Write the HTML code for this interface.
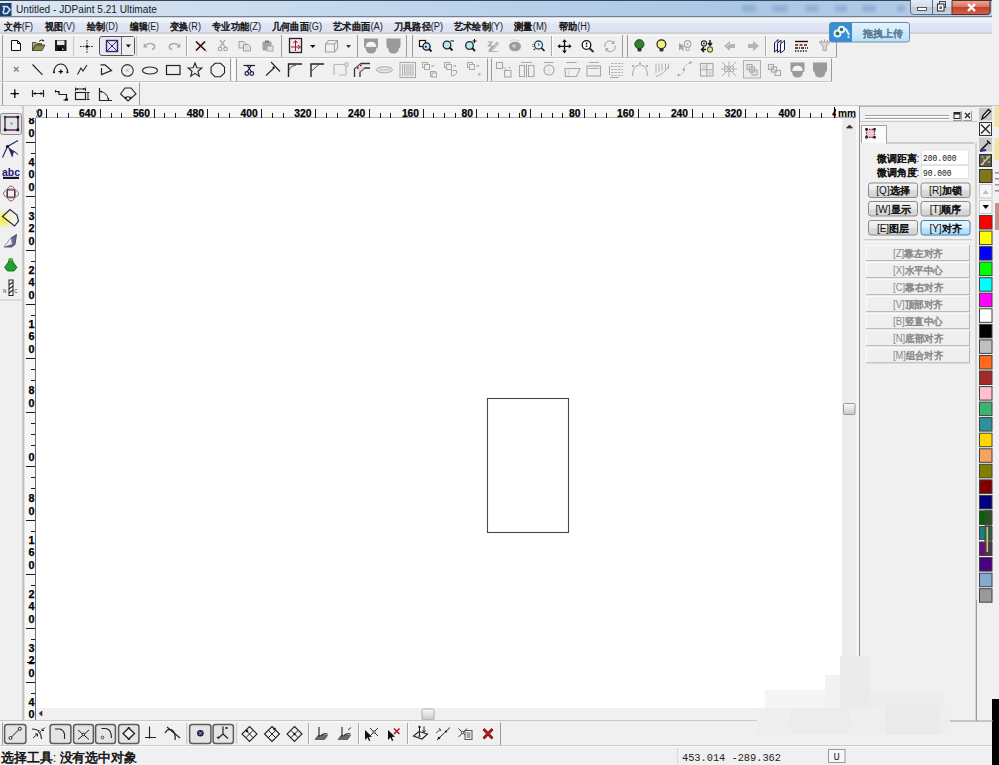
<!DOCTYPE html>
<html><head><meta charset="utf-8"><style>
html,body{margin:0;padding:0;width:999px;height:765px;overflow:hidden;background:#f0f0f0}
svg{position:absolute;left:0;top:0;font-family:'Liberation Sans', sans-serif}
</style></head><body>
<svg width="999" height="765" viewBox="0 0 999 765">
<rect x="0" y="0" width="999" height="765" fill="#f0f0f0"/>
<defs><linearGradient id="tb" x1="0" y1="0" x2="1" y2="0"><stop offset="0" stop-color="#dbe6f2"/><stop offset="0.35" stop-color="#c3d8ee"/><stop offset="0.75" stop-color="#a9c7e6"/><stop offset="1" stop-color="#b4cde8"/></linearGradient><linearGradient id="mb" x1="0" y1="0" x2="0" y2="1"><stop offset="0" stop-color="#f6f7fb"/><stop offset="0.3" stop-color="#eceff8"/><stop offset="0.45" stop-color="#e0e4f3"/><stop offset="1" stop-color="#dde1f1"/></linearGradient><linearGradient id="btn" x1="0" y1="0" x2="0" y2="1"><stop offset="0" stop-color="#f6f6f6"/><stop offset="0.5" stop-color="#e8e8e8"/><stop offset="0.5" stop-color="#dcdcdc"/><stop offset="1" stop-color="#d2d2d2"/></linearGradient><linearGradient id="btnb" x1="0" y1="0" x2="0" y2="1"><stop offset="0" stop-color="#eaf6fd"/><stop offset="0.5" stop-color="#d9f0fc"/><stop offset="0.5" stop-color="#bee6fd"/><stop offset="1" stop-color="#a7d9f5"/></linearGradient><linearGradient id="close" x1="0" y1="0" x2="0" y2="1"><stop offset="0" stop-color="#e9a99b"/><stop offset="0.5" stop-color="#d56f5c"/><stop offset="0.5" stop-color="#c7432c"/><stop offset="1" stop-color="#d4624a"/></linearGradient><linearGradient id="wbtn" x1="0" y1="0" x2="0" y2="1"><stop offset="0" stop-color="#e4ecf4"/><stop offset="0.5" stop-color="#d2dde9"/><stop offset="0.5" stop-color="#bccbdb"/><stop offset="1" stop-color="#c8d6e4"/></linearGradient><linearGradient id="thumb" x1="0" y1="0" x2="0" y2="1"><stop offset="0" stop-color="#fafafa"/><stop offset="1" stop-color="#c8c8c8"/></linearGradient><linearGradient id="bdu" x1="0" y1="0" x2="0" y2="1"><stop offset="0" stop-color="#e4f4fd"/><stop offset="1" stop-color="#b9e1f8"/></linearGradient></defs>
<rect x="0" y="0" width="992" height="17" fill="url(#tb)"/>
<rect x="0" y="0" width="992" height="1" fill="#3a4656"/>
<rect x="992" y="0" width="7" height="17" fill="#eef1f4"/>
<defs><filter id="bl" x="-50%" y="-50%" width="200%" height="200%"><feGaussianBlur stdDeviation="1.6"/></filter></defs>
<rect x="742" y="5" width="14" height="7" rx="2" fill="#7f9fc4" opacity="0.55" filter="url(#bl)"/>
<rect x="772" y="5" width="16" height="7" rx="2" fill="#7f9fc4" opacity="0.55" filter="url(#bl)"/>
<rect x="805" y="5" width="14" height="7" rx="2" fill="#7f9fc4" opacity="0.55" filter="url(#bl)"/>
<rect x="835" y="5" width="12" height="7" rx="2" fill="#7f9fc4" opacity="0.55" filter="url(#bl)"/>
<rect x="862" y="5" width="14" height="7" rx="2" fill="#7f9fc4" opacity="0.55" filter="url(#bl)"/>
<rect x="897" y="5" width="8" height="7" rx="2" fill="#7f9fc4" opacity="0.55" filter="url(#bl)"/>
<rect x="0" y="16" width="992" height="1.5" fill="#6f8192"/>
<rect x="0" y="17.5" width="992" height="15" fill="url(#mb)"/>
<rect x="0" y="32" width="992" height="2" fill="#cfd0d8"/>
<rect x="0" y="34" width="999" height="72" fill="#f0f0f0"/>
<rect x="0" y="57" width="837" height="1" fill="#c4c4c4"/>
<rect x="0" y="58" width="837" height="1" fill="#fbfbfb"/>
<rect x="0" y="81" width="832" height="1" fill="#c4c4c4"/>
<rect x="0" y="82" width="832" height="1" fill="#fbfbfb"/>
<rect x="0" y="105" width="999" height="1" fill="#c9c9c9"/>
<rect x="36" y="106" width="822" height="12" fill="#f7f7f7"/>
<rect x="36" y="117.5" width="822" height="1" fill="#6a6a6a"/>
<rect x="24" y="118" width="12" height="602" fill="#f7f7f7"/>
<rect x="23.5" y="118" width="1" height="602" fill="#cacaca"/>
<rect x="35" y="118" width="1" height="602" fill="#6a6a6a"/>
<rect x="36" y="118" width="806" height="590" fill="#ffffff"/>
<rect x="487.5" y="398.5" width="81" height="134" fill="none" stroke="#46465c" stroke-width="1.1"/>
<rect x="842" y="118" width="14" height="590" fill="#ececec"/>
<rect x="856" y="106" width="3" height="615" fill="#f6f6f6"/>
<rect x="859" y="106" width="2" height="615" fill="#8e8e8e"/>
<rect x="843.5" y="403.5" width="11.5" height="11" rx="1" fill="url(#thumb)" stroke="#8e8e8e" stroke-width="0.9"/>
<rect x="36" y="708" width="806" height="12" fill="#f0f0f0"/>
<rect x="422" y="709" width="12" height="11" rx="1.5" fill="url(#thumb)" stroke="#9c9c9c" stroke-width="0.8"/>
<rect x="0" y="720" width="999" height="1" fill="#c9c9c9"/>
<rect x="0" y="745" width="999" height="1" fill="#c9c9c9"/>
<rect x="0" y="746" width="999" height="1" fill="#fbfbfb"/>
<rect x="860" y="106" width="132" height="615" fill="#f0f0f0"/>
<rect x="860" y="106" width="132" height="1" fill="#b8b8b8"/>
<g shape-rendering="crispEdges">
<rect x="57" y="113" width="1" height="5" fill="#1a1a1a"/>
<rect x="68" y="113" width="1" height="5" fill="#1a1a1a"/>
<rect x="46" y="109" width="1" height="9" fill="#1a1a1a"/>
<rect x="111" y="113" width="1" height="5" fill="#1a1a1a"/>
<rect x="121" y="113" width="1" height="5" fill="#1a1a1a"/>
<rect x="100" y="109" width="1" height="9" fill="#1a1a1a"/>
<rect x="164" y="113" width="1" height="5" fill="#1a1a1a"/>
<rect x="175" y="113" width="1" height="5" fill="#1a1a1a"/>
<rect x="154" y="109" width="1" height="9" fill="#1a1a1a"/>
<rect x="218" y="113" width="1" height="5" fill="#1a1a1a"/>
<rect x="229" y="113" width="1" height="5" fill="#1a1a1a"/>
<rect x="207" y="109" width="1" height="9" fill="#1a1a1a"/>
<rect x="272" y="113" width="1" height="5" fill="#1a1a1a"/>
<rect x="283" y="113" width="1" height="5" fill="#1a1a1a"/>
<rect x="261" y="109" width="1" height="9" fill="#1a1a1a"/>
<rect x="326" y="113" width="1" height="5" fill="#1a1a1a"/>
<rect x="337" y="113" width="1" height="5" fill="#1a1a1a"/>
<rect x="315" y="109" width="1" height="9" fill="#1a1a1a"/>
<rect x="380" y="113" width="1" height="5" fill="#1a1a1a"/>
<rect x="390" y="113" width="1" height="5" fill="#1a1a1a"/>
<rect x="369" y="109" width="1" height="9" fill="#1a1a1a"/>
<rect x="433" y="113" width="1" height="5" fill="#1a1a1a"/>
<rect x="444" y="113" width="1" height="5" fill="#1a1a1a"/>
<rect x="455" y="113" width="1" height="5" fill="#1a1a1a"/>
<rect x="423" y="109" width="1" height="9" fill="#1a1a1a"/>
<rect x="487" y="113" width="1" height="5" fill="#1a1a1a"/>
<rect x="498" y="113" width="1" height="5" fill="#1a1a1a"/>
<rect x="509" y="113" width="1" height="5" fill="#1a1a1a"/>
<rect x="519" y="113" width="1" height="5" fill="#1a1a1a"/>
<rect x="476" y="109" width="1" height="9" fill="#1a1a1a"/>
<rect x="541" y="113" width="1" height="5" fill="#1a1a1a"/>
<rect x="552" y="113" width="1" height="5" fill="#1a1a1a"/>
<rect x="562" y="113" width="1" height="5" fill="#1a1a1a"/>
<rect x="530" y="109" width="1" height="9" fill="#1a1a1a"/>
<rect x="595" y="113" width="1" height="5" fill="#1a1a1a"/>
<rect x="606" y="113" width="1" height="5" fill="#1a1a1a"/>
<rect x="584" y="109" width="1" height="9" fill="#1a1a1a"/>
<rect x="649" y="113" width="1" height="5" fill="#1a1a1a"/>
<rect x="659" y="113" width="1" height="5" fill="#1a1a1a"/>
<rect x="638" y="109" width="1" height="9" fill="#1a1a1a"/>
<rect x="702" y="113" width="1" height="5" fill="#1a1a1a"/>
<rect x="713" y="113" width="1" height="5" fill="#1a1a1a"/>
<rect x="692" y="109" width="1" height="9" fill="#1a1a1a"/>
<rect x="756" y="113" width="1" height="5" fill="#1a1a1a"/>
<rect x="767" y="113" width="1" height="5" fill="#1a1a1a"/>
<rect x="745" y="109" width="1" height="9" fill="#1a1a1a"/>
<rect x="810" y="113" width="1" height="5" fill="#1a1a1a"/>
<rect x="821" y="113" width="1" height="5" fill="#1a1a1a"/>
<rect x="799" y="109" width="1" height="9" fill="#1a1a1a"/>
<rect x="853" y="109" width="1" height="9" fill="#1a1a1a"/>
</g>
<svg x="36" y="106" width="820" height="12" overflow="hidden"><g transform="translate(-36,-106)">
<text x="42.5" y="117" text-anchor="end" font-size="11" font-weight="bold" fill="#000" stroke="#000" stroke-width="0.25" textLength="17.2" lengthAdjust="spacingAndGlyphs">720</text>
<text x="96.3" y="117" text-anchor="end" font-size="11" font-weight="bold" fill="#000" stroke="#000" stroke-width="0.25" textLength="17.2" lengthAdjust="spacingAndGlyphs">640</text>
<text x="150.1" y="117" text-anchor="end" font-size="11" font-weight="bold" fill="#000" stroke="#000" stroke-width="0.25" textLength="17.2" lengthAdjust="spacingAndGlyphs">560</text>
<text x="203.9" y="117" text-anchor="end" font-size="11" font-weight="bold" fill="#000" stroke="#000" stroke-width="0.25" textLength="17.2" lengthAdjust="spacingAndGlyphs">480</text>
<text x="257.7" y="117" text-anchor="end" font-size="11" font-weight="bold" fill="#000" stroke="#000" stroke-width="0.25" textLength="17.2" lengthAdjust="spacingAndGlyphs">400</text>
<text x="311.5" y="117" text-anchor="end" font-size="11" font-weight="bold" fill="#000" stroke="#000" stroke-width="0.25" textLength="17.2" lengthAdjust="spacingAndGlyphs">320</text>
<text x="365.3" y="117" text-anchor="end" font-size="11" font-weight="bold" fill="#000" stroke="#000" stroke-width="0.25" textLength="17.2" lengthAdjust="spacingAndGlyphs">240</text>
<text x="419.1" y="117" text-anchor="end" font-size="11" font-weight="bold" fill="#000" stroke="#000" stroke-width="0.25" textLength="17.2" lengthAdjust="spacingAndGlyphs">160</text>
<text x="472.9" y="117" text-anchor="end" font-size="11" font-weight="bold" fill="#000" stroke="#000" stroke-width="0.25" textLength="11.5" lengthAdjust="spacingAndGlyphs">80</text>
<text x="526.7" y="117" text-anchor="end" font-size="11" font-weight="bold" fill="#000" stroke="#000" stroke-width="0.25" textLength="5.8" lengthAdjust="spacingAndGlyphs">0</text>
<text x="580.5" y="117" text-anchor="end" font-size="11" font-weight="bold" fill="#000" stroke="#000" stroke-width="0.25" textLength="11.5" lengthAdjust="spacingAndGlyphs">80</text>
<text x="634.3" y="117" text-anchor="end" font-size="11" font-weight="bold" fill="#000" stroke="#000" stroke-width="0.25" textLength="17.2" lengthAdjust="spacingAndGlyphs">160</text>
<text x="688.1" y="117" text-anchor="end" font-size="11" font-weight="bold" fill="#000" stroke="#000" stroke-width="0.25" textLength="17.2" lengthAdjust="spacingAndGlyphs">240</text>
<text x="741.9" y="117" text-anchor="end" font-size="11" font-weight="bold" fill="#000" stroke="#000" stroke-width="0.25" textLength="17.2" lengthAdjust="spacingAndGlyphs">320</text>
<text x="795.7" y="117" text-anchor="end" font-size="11" font-weight="bold" fill="#000" stroke="#000" stroke-width="0.25" textLength="17.2" lengthAdjust="spacingAndGlyphs">400</text>
<text x="849.5" y="117" text-anchor="end" font-size="11" font-weight="bold" fill="#000" stroke="#000" stroke-width="0.25" textLength="17.2" lengthAdjust="spacingAndGlyphs">480</text>
</g></svg>
<rect x="836" y="107" width="21" height="10" fill="#f7f7f7"/>
<text x="838" y="117" font-size="10.8" font-weight="bold" fill="#000" textLength="18" lengthAdjust="spacingAndGlyphs">mm</text>
<rect x="834" y="107" width="1" height="11" fill="#000"/>
<g shape-rendering="crispEdges">
<rect x="31" y="121" width="4" height="1" fill="#1a1a1a"/>
<rect x="31" y="132" width="4" height="1" fill="#1a1a1a"/>
<rect x="26" y="142" width="9" height="1" fill="#1a1a1a"/>
<rect x="31" y="153" width="4" height="1" fill="#1a1a1a"/>
<rect x="31" y="164" width="4" height="1" fill="#1a1a1a"/>
<rect x="31" y="175" width="4" height="1" fill="#1a1a1a"/>
<rect x="31" y="186" width="4" height="1" fill="#1a1a1a"/>
<rect x="26" y="196" width="9" height="1" fill="#1a1a1a"/>
<rect x="31" y="207" width="4" height="1" fill="#1a1a1a"/>
<rect x="31" y="218" width="4" height="1" fill="#1a1a1a"/>
<rect x="31" y="229" width="4" height="1" fill="#1a1a1a"/>
<rect x="31" y="240" width="4" height="1" fill="#1a1a1a"/>
<rect x="26" y="250" width="9" height="1" fill="#1a1a1a"/>
<rect x="31" y="261" width="4" height="1" fill="#1a1a1a"/>
<rect x="31" y="272" width="4" height="1" fill="#1a1a1a"/>
<rect x="31" y="283" width="4" height="1" fill="#1a1a1a"/>
<rect x="31" y="294" width="4" height="1" fill="#1a1a1a"/>
<rect x="26" y="304" width="9" height="1" fill="#1a1a1a"/>
<rect x="31" y="315" width="4" height="1" fill="#1a1a1a"/>
<rect x="31" y="326" width="4" height="1" fill="#1a1a1a"/>
<rect x="31" y="337" width="4" height="1" fill="#1a1a1a"/>
<rect x="31" y="348" width="4" height="1" fill="#1a1a1a"/>
<rect x="26" y="358" width="9" height="1" fill="#1a1a1a"/>
<rect x="31" y="369" width="4" height="1" fill="#1a1a1a"/>
<rect x="31" y="380" width="4" height="1" fill="#1a1a1a"/>
<rect x="31" y="391" width="4" height="1" fill="#1a1a1a"/>
<rect x="31" y="402" width="4" height="1" fill="#1a1a1a"/>
<rect x="26" y="412" width="9" height="1" fill="#1a1a1a"/>
<rect x="31" y="423" width="4" height="1" fill="#1a1a1a"/>
<rect x="31" y="434" width="4" height="1" fill="#1a1a1a"/>
<rect x="31" y="445" width="4" height="1" fill="#1a1a1a"/>
<rect x="31" y="456" width="4" height="1" fill="#1a1a1a"/>
<rect x="26" y="466" width="9" height="1" fill="#1a1a1a"/>
<rect x="31" y="477" width="4" height="1" fill="#1a1a1a"/>
<rect x="31" y="488" width="4" height="1" fill="#1a1a1a"/>
<rect x="31" y="499" width="4" height="1" fill="#1a1a1a"/>
<rect x="31" y="510" width="4" height="1" fill="#1a1a1a"/>
<rect x="26" y="520" width="9" height="1" fill="#1a1a1a"/>
<rect x="31" y="531" width="4" height="1" fill="#1a1a1a"/>
<rect x="31" y="542" width="4" height="1" fill="#1a1a1a"/>
<rect x="31" y="553" width="4" height="1" fill="#1a1a1a"/>
<rect x="31" y="564" width="4" height="1" fill="#1a1a1a"/>
<rect x="26" y="574" width="9" height="1" fill="#1a1a1a"/>
<rect x="31" y="585" width="4" height="1" fill="#1a1a1a"/>
<rect x="31" y="596" width="4" height="1" fill="#1a1a1a"/>
<rect x="31" y="607" width="4" height="1" fill="#1a1a1a"/>
<rect x="31" y="618" width="4" height="1" fill="#1a1a1a"/>
<rect x="26" y="628" width="9" height="1" fill="#1a1a1a"/>
<rect x="31" y="639" width="4" height="1" fill="#1a1a1a"/>
<rect x="31" y="650" width="4" height="1" fill="#1a1a1a"/>
<rect x="31" y="661" width="4" height="1" fill="#1a1a1a"/>
<rect x="31" y="672" width="4" height="1" fill="#1a1a1a"/>
<rect x="26" y="682" width="9" height="1" fill="#1a1a1a"/>
<rect x="31" y="693" width="4" height="1" fill="#1a1a1a"/>
<rect x="31" y="704" width="4" height="1" fill="#1a1a1a"/>
<rect x="31" y="715" width="4" height="1" fill="#1a1a1a"/>
</g>
<svg x="24" y="118" width="11" height="602" overflow="hidden"><g transform="translate(-24,-118)">
<rect x="28" y="102.4" width="7" height="36.0" fill="#f7f7f7"/>
<text x="34.5" y="112" text-anchor="end" font-size="10.8" stroke="#000" stroke-width="0.25" font-weight="bold" fill="#000">4</text>
<text x="34.5" y="124" text-anchor="end" font-size="10.8" stroke="#000" stroke-width="0.25" font-weight="bold" fill="#000">8</text>
<text x="34.5" y="137" text-anchor="end" font-size="10.8" stroke="#000" stroke-width="0.25" font-weight="bold" fill="#000">0</text>
<rect x="28" y="156.4" width="7" height="36.0" fill="#f7f7f7"/>
<text x="34.5" y="166" text-anchor="end" font-size="10.8" stroke="#000" stroke-width="0.25" font-weight="bold" fill="#000">4</text>
<text x="34.5" y="178" text-anchor="end" font-size="10.8" stroke="#000" stroke-width="0.25" font-weight="bold" fill="#000">0</text>
<text x="34.5" y="191" text-anchor="end" font-size="10.8" stroke="#000" stroke-width="0.25" font-weight="bold" fill="#000">0</text>
<rect x="28" y="210.4" width="7" height="36.0" fill="#f7f7f7"/>
<text x="34.5" y="220" text-anchor="end" font-size="10.8" stroke="#000" stroke-width="0.25" font-weight="bold" fill="#000">3</text>
<text x="34.5" y="232" text-anchor="end" font-size="10.8" stroke="#000" stroke-width="0.25" font-weight="bold" fill="#000">2</text>
<text x="34.5" y="245" text-anchor="end" font-size="10.8" stroke="#000" stroke-width="0.25" font-weight="bold" fill="#000">0</text>
<rect x="28" y="264.4" width="7" height="36.0" fill="#f7f7f7"/>
<text x="34.5" y="274" text-anchor="end" font-size="10.8" stroke="#000" stroke-width="0.25" font-weight="bold" fill="#000">2</text>
<text x="34.5" y="286" text-anchor="end" font-size="10.8" stroke="#000" stroke-width="0.25" font-weight="bold" fill="#000">4</text>
<text x="34.5" y="299" text-anchor="end" font-size="10.8" stroke="#000" stroke-width="0.25" font-weight="bold" fill="#000">0</text>
<rect x="28" y="318.4" width="7" height="36.0" fill="#f7f7f7"/>
<text x="34.5" y="328" text-anchor="end" font-size="10.8" stroke="#000" stroke-width="0.25" font-weight="bold" fill="#000">1</text>
<text x="34.5" y="340" text-anchor="end" font-size="10.8" stroke="#000" stroke-width="0.25" font-weight="bold" fill="#000">6</text>
<text x="34.5" y="353" text-anchor="end" font-size="10.8" stroke="#000" stroke-width="0.25" font-weight="bold" fill="#000">0</text>
<rect x="28" y="384.4" width="7" height="24.0" fill="#f7f7f7"/>
<text x="34.5" y="394" text-anchor="end" font-size="10.8" stroke="#000" stroke-width="0.25" font-weight="bold" fill="#000">8</text>
<text x="34.5" y="407" text-anchor="end" font-size="10.8" stroke="#000" stroke-width="0.25" font-weight="bold" fill="#000">0</text>
<rect x="28" y="450.4" width="7" height="12.0" fill="#f7f7f7"/>
<text x="34.5" y="461" text-anchor="end" font-size="10.8" stroke="#000" stroke-width="0.25" font-weight="bold" fill="#000">0</text>
<rect x="28" y="492.4" width="7" height="24.0" fill="#f7f7f7"/>
<text x="34.5" y="502" text-anchor="end" font-size="10.8" stroke="#000" stroke-width="0.25" font-weight="bold" fill="#000">8</text>
<text x="34.5" y="515" text-anchor="end" font-size="10.8" stroke="#000" stroke-width="0.25" font-weight="bold" fill="#000">0</text>
<rect x="28" y="534.4" width="7" height="36.0" fill="#f7f7f7"/>
<text x="34.5" y="544" text-anchor="end" font-size="10.8" stroke="#000" stroke-width="0.25" font-weight="bold" fill="#000">1</text>
<text x="34.5" y="556" text-anchor="end" font-size="10.8" stroke="#000" stroke-width="0.25" font-weight="bold" fill="#000">6</text>
<text x="34.5" y="569" text-anchor="end" font-size="10.8" stroke="#000" stroke-width="0.25" font-weight="bold" fill="#000">0</text>
<rect x="28" y="588.4" width="7" height="36.0" fill="#f7f7f7"/>
<text x="34.5" y="598" text-anchor="end" font-size="10.8" stroke="#000" stroke-width="0.25" font-weight="bold" fill="#000">2</text>
<text x="34.5" y="610" text-anchor="end" font-size="10.8" stroke="#000" stroke-width="0.25" font-weight="bold" fill="#000">4</text>
<text x="34.5" y="623" text-anchor="end" font-size="10.8" stroke="#000" stroke-width="0.25" font-weight="bold" fill="#000">0</text>
<rect x="28" y="642.4" width="7" height="36.0" fill="#f7f7f7"/>
<text x="34.5" y="652" text-anchor="end" font-size="10.8" stroke="#000" stroke-width="0.25" font-weight="bold" fill="#000">3</text>
<text x="34.5" y="664" text-anchor="end" font-size="10.8" stroke="#000" stroke-width="0.25" font-weight="bold" fill="#000">2</text>
<text x="34.5" y="677" text-anchor="end" font-size="10.8" stroke="#000" stroke-width="0.25" font-weight="bold" fill="#000">0</text>
<rect x="28" y="696.4" width="7" height="36.0" fill="#f7f7f7"/>
<text x="34.5" y="706" text-anchor="end" font-size="10.8" stroke="#000" stroke-width="0.25" font-weight="bold" fill="#000">4</text>
<text x="34.5" y="718" text-anchor="end" font-size="10.8" stroke="#000" stroke-width="0.25" font-weight="bold" fill="#000">0</text>
<text x="34.5" y="731" text-anchor="end" font-size="10.8" stroke="#000" stroke-width="0.25" font-weight="bold" fill="#000">0</text>
</g></svg>
<rect x="27" y="662" width="8" height="1" fill="#000"/>
<rect x="0" y="106" width="23" height="614" fill="#f0f0f0"/>
<rect x="22.5" y="106" width="1" height="614" fill="#a8a8a8"/>
<rect x="0" y="110" width="23" height="1" fill="#fafafa"/>
<rect x="0" y="299.5" width="23" height="1" fill="#c4c4c4"/>
<rect x="0.5" y="113.5" width="21" height="21" rx="2" fill="#e6e6ea" stroke="#8a8a8a" stroke-width="1"/>
<rect x="979.5" y="215.5" width="12.5" height="13.5" fill="#ff0000" stroke="#404040" stroke-width="1"/>
<rect x="979.5" y="231.1" width="12.5" height="13.5" fill="#ffff00" stroke="#404040" stroke-width="1"/>
<rect x="979.5" y="246.6" width="12.5" height="13.5" fill="#0000ff" stroke="#404040" stroke-width="1"/>
<rect x="979.5" y="262.1" width="12.5" height="13.5" fill="#00ff00" stroke="#404040" stroke-width="1"/>
<rect x="979.5" y="277.7" width="12.5" height="13.5" fill="#00ffff" stroke="#404040" stroke-width="1"/>
<rect x="979.5" y="293.2" width="12.5" height="13.5" fill="#ff00ff" stroke="#404040" stroke-width="1"/>
<rect x="979.5" y="308.8" width="12.5" height="13.5" fill="#ffffff" stroke="#404040" stroke-width="1"/>
<rect x="979.5" y="324.4" width="12.5" height="13.5" fill="#000000" stroke="#404040" stroke-width="1"/>
<rect x="979.5" y="339.9" width="12.5" height="13.5" fill="#c0c0c0" stroke="#404040" stroke-width="1"/>
<rect x="979.5" y="355.5" width="12.5" height="13.5" fill="#ff6a1f" stroke="#404040" stroke-width="1"/>
<rect x="979.5" y="371.0" width="12.5" height="13.5" fill="#a52a2a" stroke="#404040" stroke-width="1"/>
<rect x="979.5" y="386.6" width="12.5" height="13.5" fill="#ffc0cb" stroke="#404040" stroke-width="1"/>
<rect x="979.5" y="402.1" width="12.5" height="13.5" fill="#3cb371" stroke="#404040" stroke-width="1"/>
<rect x="979.5" y="417.6" width="12.5" height="13.5" fill="#2f8f9a" stroke="#404040" stroke-width="1"/>
<rect x="979.5" y="433.2" width="12.5" height="13.5" fill="#ffd700" stroke="#404040" stroke-width="1"/>
<rect x="979.5" y="448.8" width="12.5" height="13.5" fill="#f4a460" stroke="#404040" stroke-width="1"/>
<rect x="979.5" y="464.3" width="12.5" height="13.5" fill="#808000" stroke="#404040" stroke-width="1"/>
<rect x="979.5" y="479.9" width="12.5" height="13.5" fill="#800000" stroke="#404040" stroke-width="1"/>
<rect x="979.5" y="495.4" width="12.5" height="13.5" fill="#000080" stroke="#404040" stroke-width="1"/>
<rect x="979.5" y="510.9" width="12.5" height="13.5" fill="#006400" stroke="#404040" stroke-width="1"/>
<rect x="979.5" y="526.5" width="12.5" height="13.5" fill="#1f7f7f" stroke="#404040" stroke-width="1"/>
<rect x="979.5" y="542.0" width="12.5" height="13.5" fill="#6a0d83" stroke="#404040" stroke-width="1"/>
<rect x="979.5" y="557.6" width="12.5" height="13.5" fill="#4b0082" stroke="#404040" stroke-width="1"/>
<rect x="979.5" y="573.2" width="12.5" height="13.5" fill="#87a9d0" stroke="#404040" stroke-width="1"/>
<rect x="979.5" y="588.7" width="12.5" height="13.5" fill="#9a9a9a" stroke="#404040" stroke-width="1"/>
<rect x="979" y="108" width="13" height="12.5" fill="#c9c9c9"/>
<rect x="979" y="137.5" width="13" height="14" fill="#c9c9c9"/>
<rect x="979.5" y="122.5" width="12" height="13" fill="#f4f4f4" stroke="#333" stroke-width="1"/>
<path d="M981 124.5 L990 133.5 M990 124.5 L981 133.5" stroke="#222" stroke-width="1.3"/>
<rect x="979.5" y="154.5" width="12" height="12" fill="#5a5a4a" stroke="#333"/>
<rect x="979.5" y="169.5" width="12.5" height="13" fill="#80781a" stroke="#333"/>
<rect x="979.5" y="184.5" width="12.5" height="13.5" fill="#f7f7f7" stroke="#c8c8c8"/>
<path d="M982.5 194 L985.7 190 L989 194 Z" fill="#bdbdbd"/>
<rect x="979.5" y="200.5" width="12.5" height="13" fill="#fbfbfb" stroke="#c8c8c8"/>
<path d="M982.5 205 L985.7 209 L989 205 Z" fill="#000"/>
<path d="M982 119 L983 115.5 L988.5 109.5 L990.5 111.5 L984.8 117.3 Z" fill="#fff" stroke="#111" stroke-width="1.4"/>
<path d="M981 150 L988 143 M987 140.5 L990.5 144" stroke="#111" stroke-width="1.6"/><path d="M980 151 L986 150" stroke="#1a2a9a" stroke-width="2"/>
<path d="M981 165 L990 156" stroke="#e0d890" stroke-width="1.3"/><path d="M981.5 157 h2 M986 157 h2 M983 160 h2 M988 162h2 M982 164h2" stroke="#ddd" stroke-width="1"/>
<rect x="993" y="106" width="6" height="614" fill="#f1f1f1"/>
<rect x="994.5" y="106" width="4.5" height="21" fill="#f0e6a0"/>
<rect x="994.5" y="138" width="4.5" height="22" fill="#f0e6a0"/>
<rect x="995" y="172" width="4" height="1.6" fill="#8a9ab0"/>
<rect x="995" y="178" width="4" height="1.6" fill="#a08a8a"/>
<rect x="995" y="184" width="4" height="1.6" fill="#8aa0b0"/>
<rect x="995" y="190" width="4" height="1.6" fill="#a08a8a"/>
<rect x="995" y="203" width="4" height="27" fill="#c89088"/>
<rect x="992" y="699" width="7" height="66" fill="#000"/>
<rect x="861" y="107" width="116" height="614" fill="#f0f0f0"/>
<rect x="865" y="115" width="84" height="1" fill="#a0a0a0"/><rect x="865" y="116" width="84" height="1" fill="#ffffff"/>
<rect x="865" y="118" width="84" height="1" fill="#a0a0a0"/><rect x="865" y="119" width="84" height="1" fill="#ffffff"/>
<rect x="954" y="112.5" width="6" height="6" fill="none" stroke="#222" stroke-width="1"/><rect x="954" y="112.5" width="6" height="2" fill="#222"/><path d="M953 120.5h9M961.5 111v10" stroke="#9a9a9a" stroke-width="1"/>
<path d="M965 113 L970 118 M970 113 L965 118" stroke="#222" stroke-width="1.2"/><path d="M963 120.5h9M971.5 111v10" stroke="#9a9a9a" stroke-width="1"/>
<rect x="860" y="121" width="117" height="1" fill="#c8c8c8"/>
<path d="M861.5 143 V125.5 H886.5 V143" fill="#fbfbfb" stroke="#a0a0a0" stroke-width="1"/>
<rect x="886" y="142.5" width="88" height="1" fill="#a8a8a8"/>
<rect x="975.5" y="142.5" width="1" height="578" fill="#b8b8b8"/>
<rect x="866.5" y="129.3" width="8" height="8" fill="#f8c4d4" stroke="#5a2a40" stroke-width="1.2" stroke-dasharray="1.5 1"/>
<rect x="865.3" y="128.10000000000002" width="2.4" height="2.4" fill="#111"/>
<rect x="873.3" y="128.10000000000002" width="2.4" height="2.4" fill="#111"/>
<rect x="865.3" y="136.10000000000002" width="2.4" height="2.4" fill="#111"/>
<rect x="873.3" y="136.10000000000002" width="2.4" height="2.4" fill="#111"/>
<text x="876.5" y="161.5" font-size="10" fill="#111"><tspan stroke="#111" stroke-width="0.55">微调距离</tspan>:</text>
<text x="876.5" y="176" font-size="10" fill="#111"><tspan stroke="#111" stroke-width="0.55">微调角度</tspan>:</text>
<rect x="921.5" y="150" width="47" height="14.5" fill="#ffffff" stroke="#e4e4e4" stroke-width="1"/>
<rect x="921.5" y="165.5" width="47" height="13" fill="#ffffff" stroke="#e4e4e4" stroke-width="1"/>
<text x="923" y="161" font-family="Liberation Mono" font-size="9.6" fill="#111" textLength="33.5" lengthAdjust="spacingAndGlyphs">200.000</text>
<text x="923" y="176" font-family="Liberation Mono" font-size="9.6" fill="#111" textLength="28.5" lengthAdjust="spacingAndGlyphs">90.000</text>
<rect x="868.5" y="183.0" width="49" height="14.5" rx="2.5" fill="url(#btn)" stroke="#8a8a8a" stroke-width="1"/>
<text x="893" y="194.0" text-anchor="middle" font-size="10" fill="#111">[Q]<tspan stroke="#111" stroke-width="0.55">选择</tspan></text>
<rect x="921.0" y="183.0" width="49" height="14.5" rx="2.5" fill="url(#btn)" stroke="#8a8a8a" stroke-width="1"/>
<text x="945.5" y="194.0" text-anchor="middle" font-size="10" fill="#111">[R]<tspan stroke="#111" stroke-width="0.55">加锁</tspan></text>
<rect x="868.5" y="201.5" width="49" height="14.5" rx="2.5" fill="url(#btn)" stroke="#8a8a8a" stroke-width="1"/>
<text x="893" y="212.5" text-anchor="middle" font-size="10" fill="#111">[W]<tspan stroke="#111" stroke-width="0.55">显示</tspan></text>
<rect x="921.0" y="201.5" width="49" height="14.5" rx="2.5" fill="url(#btn)" stroke="#8a8a8a" stroke-width="1"/>
<text x="945.5" y="212.5" text-anchor="middle" font-size="10" fill="#111">[T]<tspan stroke="#111" stroke-width="0.55">顺序</tspan></text>
<rect x="868.5" y="220.5" width="49" height="14.5" rx="2.5" fill="url(#btn)" stroke="#8a8a8a" stroke-width="1"/>
<text x="893" y="231.5" text-anchor="middle" font-size="10" fill="#111">[E]<tspan stroke="#111" stroke-width="0.55">图层</tspan></text>
<rect x="921.0" y="220.5" width="49" height="14.5" rx="2.5" fill="url(#btnb)" stroke="#3c7fb1" stroke-width="1"/>
<text x="945.5" y="231.5" text-anchor="middle" font-size="10" fill="#111">[Y]<tspan stroke="#111" stroke-width="0.55">对齐</tspan></text>
<rect x="864" y="239.5" width="108" height="1" fill="#a8a8a8"/><rect x="864" y="240.5" width="108" height="1" fill="#fff"/>
<rect x="866" y="245.0" width="104" height="16" fill="#efefef"/>
<rect x="866" y="245.0" width="104" height="1" fill="#fbfbfb"/><rect x="866" y="245.0" width="1" height="16" fill="#fbfbfb"/>
<rect x="866" y="260.0" width="104" height="1" fill="#b4b4b4"/><rect x="969" y="245.0" width="1" height="16" fill="#b4b4b4"/>
<text x="918" y="256.8" text-anchor="middle" font-size="10" fill="#8a8a8a" textLength="50" lengthAdjust="spacingAndGlyphs">[Z]<tspan stroke="#8a8a8a" stroke-width="0.55">靠左对齐</tspan></text>
<rect x="866" y="262.1" width="104" height="16" fill="#efefef"/>
<rect x="866" y="262.1" width="104" height="1" fill="#fbfbfb"/><rect x="866" y="262.1" width="1" height="16" fill="#fbfbfb"/>
<rect x="866" y="277.1" width="104" height="1" fill="#b4b4b4"/><rect x="969" y="262.1" width="1" height="16" fill="#b4b4b4"/>
<text x="918" y="273.9" text-anchor="middle" font-size="10" fill="#8a8a8a" textLength="50" lengthAdjust="spacingAndGlyphs">[X]<tspan stroke="#8a8a8a" stroke-width="0.55">水平中心</tspan></text>
<rect x="866" y="279.1" width="104" height="16" fill="#efefef"/>
<rect x="866" y="279.1" width="104" height="1" fill="#fbfbfb"/><rect x="866" y="279.1" width="1" height="16" fill="#fbfbfb"/>
<rect x="866" y="294.1" width="104" height="1" fill="#b4b4b4"/><rect x="969" y="279.1" width="1" height="16" fill="#b4b4b4"/>
<text x="918" y="290.9" text-anchor="middle" font-size="10" fill="#8a8a8a" textLength="50" lengthAdjust="spacingAndGlyphs">[C]<tspan stroke="#8a8a8a" stroke-width="0.55">靠右对齐</tspan></text>
<rect x="866" y="296.1" width="104" height="16" fill="#efefef"/>
<rect x="866" y="296.1" width="104" height="1" fill="#fbfbfb"/><rect x="866" y="296.1" width="1" height="16" fill="#fbfbfb"/>
<rect x="866" y="311.1" width="104" height="1" fill="#b4b4b4"/><rect x="969" y="296.1" width="1" height="16" fill="#b4b4b4"/>
<text x="918" y="307.9" text-anchor="middle" font-size="10" fill="#8a8a8a" textLength="50" lengthAdjust="spacingAndGlyphs">[V]<tspan stroke="#8a8a8a" stroke-width="0.55">顶部对齐</tspan></text>
<rect x="866" y="313.2" width="104" height="16" fill="#efefef"/>
<rect x="866" y="313.2" width="104" height="1" fill="#fbfbfb"/><rect x="866" y="313.2" width="1" height="16" fill="#fbfbfb"/>
<rect x="866" y="328.2" width="104" height="1" fill="#b4b4b4"/><rect x="969" y="313.2" width="1" height="16" fill="#b4b4b4"/>
<text x="918" y="325.0" text-anchor="middle" font-size="10" fill="#8a8a8a" textLength="50" lengthAdjust="spacingAndGlyphs">[B]<tspan stroke="#8a8a8a" stroke-width="0.55">竖直中心</tspan></text>
<rect x="866" y="330.2" width="104" height="16" fill="#efefef"/>
<rect x="866" y="330.2" width="104" height="1" fill="#fbfbfb"/><rect x="866" y="330.2" width="1" height="16" fill="#fbfbfb"/>
<rect x="866" y="345.2" width="104" height="1" fill="#b4b4b4"/><rect x="969" y="330.2" width="1" height="16" fill="#b4b4b4"/>
<text x="918" y="342.1" text-anchor="middle" font-size="10" fill="#8a8a8a" textLength="50" lengthAdjust="spacingAndGlyphs">[N]<tspan stroke="#8a8a8a" stroke-width="0.55">底部对齐</tspan></text>
<rect x="866" y="347.3" width="104" height="16" fill="#efefef"/>
<rect x="866" y="347.3" width="104" height="1" fill="#fbfbfb"/><rect x="866" y="347.3" width="1" height="16" fill="#fbfbfb"/>
<rect x="866" y="362.3" width="104" height="1" fill="#b4b4b4"/><rect x="969" y="347.3" width="1" height="16" fill="#b4b4b4"/>
<text x="918" y="359.1" text-anchor="middle" font-size="10" fill="#8a8a8a" textLength="50" lengthAdjust="spacingAndGlyphs">[M]<tspan stroke="#8a8a8a" stroke-width="0.55">组合对齐</tspan></text>
<rect x="976" y="600" width="1" height="121" fill="#9a9a9a"/>
<rect x="677.5" y="748" width="1" height="17" fill="#c8c8c8"/><rect x="678.5" y="748" width="1" height="17" fill="#fafafa"/>
<rect x="950" y="720.5" width="43" height="1" fill="#9a9a9a"/>
<text x="1" y="761.5" font-size="12.5" fill="#111" textLength="136" lengthAdjust="spacingAndGlyphs"><tspan stroke="#111" stroke-width="0.55">选择工具</tspan>: <tspan stroke="#111" stroke-width="0.55">没有选中对象</tspan></text>
<text x="682" y="761" font-family="Liberation Mono" font-size="11" fill="#222" textLength="99" lengthAdjust="spacingAndGlyphs">453.014 -289.362</text>
<rect x="828.5" y="749.5" width="16.5" height="13" fill="#f7f7f7" stroke="#9a9a9a" stroke-width="1"/>
<text x="836.7" y="760" text-anchor="middle" font-family="Liberation Mono" font-size="10.5" fill="#333">U</text>
<rect x="0" y="3" width="11.5" height="13" fill="#1c3f6e"/>
<path d="M2.5 6.5 H7 L10 9.5 L7 13.5 H3" fill="none" stroke="#cfe6f8" stroke-width="1.6"/><path d="M4.5 7 L3 13" stroke="#cfe6f8" stroke-width="1.6"/>
<text x="16" y="13" font-size="10.1" fill="#1b1b1b">Untitled - JDPaint 5.21 Ultimate</text>
<text x="4" y="29.5" font-size="10" fill="#1b1b1b" textLength="29" lengthAdjust="spacingAndGlyphs"><tspan stroke="#1b1b1b" stroke-width="0.55">文件</tspan>(F)</text>
<text x="45" y="29.5" font-size="10" fill="#1b1b1b" textLength="30" lengthAdjust="spacingAndGlyphs"><tspan stroke="#1b1b1b" stroke-width="0.55">视图</tspan>(V)</text>
<text x="87" y="29.5" font-size="10" fill="#1b1b1b" textLength="31" lengthAdjust="spacingAndGlyphs"><tspan stroke="#1b1b1b" stroke-width="0.55">绘制</tspan>(D)</text>
<text x="130" y="29.5" font-size="10" fill="#1b1b1b" textLength="29" lengthAdjust="spacingAndGlyphs"><tspan stroke="#1b1b1b" stroke-width="0.55">编辑</tspan>(E)</text>
<text x="170" y="29.5" font-size="10" fill="#1b1b1b" textLength="31" lengthAdjust="spacingAndGlyphs"><tspan stroke="#1b1b1b" stroke-width="0.55">变换</tspan>(R)</text>
<text x="212" y="29.5" font-size="10" fill="#1b1b1b" textLength="49" lengthAdjust="spacingAndGlyphs"><tspan stroke="#1b1b1b" stroke-width="0.55">专业功能</tspan>(Z)</text>
<text x="272" y="29.5" font-size="10" fill="#1b1b1b" textLength="50" lengthAdjust="spacingAndGlyphs"><tspan stroke="#1b1b1b" stroke-width="0.55">几何曲面</tspan>(G)</text>
<text x="333" y="29.5" font-size="10" fill="#1b1b1b" textLength="50" lengthAdjust="spacingAndGlyphs"><tspan stroke="#1b1b1b" stroke-width="0.55">艺术曲面</tspan>(A)</text>
<text x="394" y="29.5" font-size="10" fill="#1b1b1b" textLength="49" lengthAdjust="spacingAndGlyphs"><tspan stroke="#1b1b1b" stroke-width="0.55">刀具路径</tspan>(P)</text>
<text x="454" y="29.5" font-size="10" fill="#1b1b1b" textLength="49" lengthAdjust="spacingAndGlyphs"><tspan stroke="#1b1b1b" stroke-width="0.55">艺术绘制</tspan>(Y)</text>
<text x="514" y="29.5" font-size="10" fill="#1b1b1b" textLength="33" lengthAdjust="spacingAndGlyphs"><tspan stroke="#1b1b1b" stroke-width="0.55">测量</tspan>(M)</text>
<text x="559" y="29.5" font-size="10" fill="#1b1b1b" textLength="31" lengthAdjust="spacingAndGlyphs"><tspan stroke="#1b1b1b" stroke-width="0.55">帮助</tspan>(H)</text>
<path d="M910.5 0 V11.5 Q910.5 14.5 913.5 14.5 H987 Q990 14.5 990 11.5 V0" fill="url(#wbtn)" stroke="#5e6f83" stroke-width="1"/>
<path d="M952 0.5 H990 V11.5 Q990 14.5 987 14.5 H952 Z" fill="url(#close)" stroke="#5a2a20" stroke-width="1"/>
<rect x="932" y="0" width="1" height="14.5" fill="#5a6a7a"/>
<rect x="917.5" y="7.5" width="9" height="3" fill="#fff" stroke="#334" stroke-width="0.8"/>
<rect x="939.5" y="1.5" width="6" height="6" fill="none" stroke="#445" stroke-width="1"/><rect x="937.5" y="4" width="6.5" height="7" fill="#fff" stroke="#334" stroke-width="1.1"/><rect x="939.5" y="6.5" width="2.5" height="2.5" fill="#556"/>
<path d="M968 4 L975 11 M975 4 L968 11" stroke="#fff" stroke-width="2.4"/>
<rect x="0" y="35" width="836" height="1" fill="#fafafa"/>
<rect x="0" y="58.5" width="831" height="1" fill="#fafafa"/>
<rect x="0" y="82.5" width="139" height="1" fill="#fafafa"/>
<rect x="2" y="35" width="1" height="22" fill="#9a9a9a"/>
<rect x="281" y="35" width="1" height="22" fill="#9a9a9a"/>
<rect x="281" y="35" width="1" height="22" fill="#9a9a9a"/>
<rect x="357" y="35" width="1" height="22" fill="#9a9a9a"/>
<rect x="357" y="35" width="1" height="22" fill="#9a9a9a"/>
<rect x="406" y="35" width="1" height="22" fill="#9a9a9a"/>
<rect x="412" y="35" width="1" height="22" fill="#9a9a9a"/>
<rect x="622" y="35" width="1" height="22" fill="#9a9a9a"/>
<rect x="627" y="35" width="1" height="22" fill="#9a9a9a"/>
<rect x="836" y="35" width="1" height="22" fill="#9a9a9a"/>
<rect x="73.5" y="36" width="1" height="20" fill="#a8a8a8"/>
<rect x="74.5" y="36" width="1" height="20" fill="#fdfdfd"/>
<rect x="136.5" y="36" width="1" height="20" fill="#a8a8a8"/>
<rect x="137.5" y="36" width="1" height="20" fill="#fdfdfd"/>
<rect x="186" y="36" width="1" height="20" fill="#a8a8a8"/>
<rect x="187" y="36" width="1" height="20" fill="#fdfdfd"/>
<rect x="551" y="36" width="1" height="20" fill="#a8a8a8"/>
<rect x="552" y="36" width="1" height="20" fill="#fdfdfd"/>
<rect x="765" y="36" width="1" height="20" fill="#a8a8a8"/>
<rect x="766" y="36" width="1" height="20" fill="#fdfdfd"/>
<rect x="2" y="58.5" width="1" height="22.5" fill="#9a9a9a"/>
<rect x="230" y="58.5" width="1" height="22.5" fill="#9a9a9a"/>
<rect x="236" y="58.5" width="1" height="22.5" fill="#9a9a9a"/>
<rect x="487" y="58.5" width="1" height="22.5" fill="#9a9a9a"/>
<rect x="491" y="58.5" width="1" height="22.5" fill="#9a9a9a"/>
<rect x="831" y="58.5" width="1" height="22.5" fill="#9a9a9a"/>
<rect x="2" y="82.5" width="1" height="22.5" fill="#9a9a9a"/>
<rect x="139" y="82.5" width="1" height="22.5" fill="#9a9a9a"/>
<rect x="2" y="721.5" width="1" height="23.5" fill="#9a9a9a"/>
<rect x="500" y="721.5" width="1" height="23.5" fill="#9a9a9a"/>
<rect x="0" y="721.5" width="501" height="1" fill="#fafafa"/>
<rect x="186.5" y="723" width="1" height="21" fill="#a8a8a8"/>
<rect x="187.5" y="723" width="1" height="21" fill="#fdfdfd"/>
<rect x="236.5" y="723" width="1" height="21" fill="#a8a8a8"/>
<rect x="237.5" y="723" width="1" height="21" fill="#fdfdfd"/>
<rect x="308" y="723" width="1" height="21" fill="#a8a8a8"/>
<rect x="309" y="723" width="1" height="21" fill="#fdfdfd"/>
<rect x="358" y="723" width="1" height="21" fill="#a8a8a8"/>
<rect x="359" y="723" width="1" height="21" fill="#fdfdfd"/>
<rect x="407" y="723" width="1" height="21" fill="#a8a8a8"/>
<rect x="408" y="723" width="1" height="21" fill="#fdfdfd"/>
<rect x="406" y="35" width="1" height="22" fill="#9a9a9a"/>
<path d="M11.5 40.5 H17.5 L20.5 43.5 V50.5 H11.5 Z" fill="#fff" stroke="#111" stroke-width="1"/><path d="M17.5 40.5 V43.5 H20.5" fill="none" stroke="#111" stroke-width="1"/>
<path d="M32.5 42.5 H36 L37 43.5 H41.5 V45 H35 L32.5 50.5 Z" fill="#b8b870" stroke="#333" stroke-width="0.8"/><path d="M32.5 50.5 L35.5 45 H45 L42 50.5 Z" fill="#8c8c3c" stroke="#333" stroke-width="0.8"/><path d="M39 41.5 Q41 39 43.5 40.5" fill="none" stroke="#222" stroke-width="1"/><path d="M43 39.5 L44.5 41 L42.5 41.5Z" fill="#222"/>
<rect x="55" y="40" width="11.5" height="11" fill="#1e1e1e"/><rect x="57" y="40.5" width="7.5" height="4.5" fill="#e8e8e8"/><rect x="58" y="47.5" width="5.5" height="3.5" fill="#000"/><rect x="62" y="48.5" width="1.5" height="1.5" fill="#ddd"/>
<path d="M80 46.5 H94 M87 40 V53.5" stroke="#222" stroke-width="1" stroke-dasharray="1.6 1.2"/><rect x="85.8" y="45.3" width="2.4" height="2.4" fill="#111"/>
<rect x="99.5" y="36.5" width="35" height="19" rx="2.5" fill="#e9e9ef" stroke="#555" stroke-width="1"/><rect x="121" y="37" width="1" height="18" fill="#666"/><rect x="122" y="37" width="12" height="18" fill="#eeeeee"/>
<rect x="106.5" y="40.5" width="11" height="11" fill="#e6e6fa" stroke="#2a2a70" stroke-width="1.4"/><path d="M107 41 L117 51 M117 41 L107 51" stroke="#2a2a70" stroke-width="1"/>
<path d="M125.8 44.5 H131 L128.4 47.5 Z" fill="#111"/>
<path d="M146 45 Q150 42 154 45 Q156 48 152 49.5" fill="none" stroke="#a8a8a8" stroke-width="1.6"/><path d="M144 43 L147.5 47.5 L143.5 47.5 Z" fill="#a8a8a8"/>
<path d="M178 45 Q174 42 170 45 Q168 48 172 49.5" fill="none" stroke="#a8a8a8" stroke-width="1.6"/><path d="M180 43 L176.5 47.5 L180.5 47.5 Z" fill="#a8a8a8"/>
<path d="M196 41.5 L205.5 50.5 M205 41.5 L196 50.5" stroke="#3a0c0c" stroke-width="1.7"/><path d="M205.5 50.5 L207 52" stroke="#b07070" stroke-width="1"/>
<path d="M220 40 L225 47 M225 40 L220 47" stroke="#a0a0a0" stroke-width="1.2"/><circle cx="220" cy="49" r="1.8" fill="none" stroke="#a0a0a0" stroke-width="1.1"/><circle cx="225.5" cy="49" r="1.8" fill="none" stroke="#a0a0a0" stroke-width="1.1"/>
<path d="M239 41.5 H244 L246 43.5 V48 H239 Z" fill="#e6e6e6" stroke="#a0a0a0" stroke-width="1"/><path d="M243.5 44.5 H248.5 L250.5 46.5 V51 H243.5 Z" fill="#e0e0e0" stroke="#a0a0a0" stroke-width="1"/>
<rect x="262.5" y="41.5" width="9" height="9" rx="1" fill="#a4a4a4"/><rect x="265" y="40.5" width="4" height="2" fill="#777"/><rect x="267" y="46" width="6" height="5" fill="#e2e2e2" stroke="#999" stroke-width="0.8"/>
<rect x="289.5" y="38.5" width="12" height="14" fill="#f9e4ec" stroke="#222" stroke-width="1.3"/><path d="M295.5 51 V41 M291 47 H300" stroke="#8a2030" stroke-width="1"/><path d="M293.5 43 L295.5 40.5 L297.5 43 M298 45 L300.5 47 L298 49" fill="none" stroke="#8a2030" stroke-width="1"/>
<path d="M310 45 H315.5 L312.8 48 Z" fill="#111"/>
<path d="M325.5 44 L328.5 40.5 H337.5 V48.5 L334.5 52 H325.5 Z M325.5 44 H334.5 V52 M334.5 44 L337.5 40.5" fill="none" stroke="#a0a0a0" stroke-width="1.1"/>
<path d="M346 45 H351 L348.5 48 Z" fill="#333"/>
<path d="M364 38.5 H378 V46.0 Q378 47.5 376.3 48.5 Q376 53.5 371 53.5 Q366 53.5 365.7 48.5 Q364 47.5 364 46.0 Z" fill="#9a9a9a"/><path d="M365.8 47.0 Q365.8 41.8 371 41.8 Q376.2 41.8 376.2 47.0 Z" fill="#f4f4f4"/><rect x="365.8" y="46.8" width="10.4" height="0.7" fill="#c09090" opacity="0.5"/>
<path d="M386.5 38.5 H400.5 V46.0 Q400.5 47.5 398.8 48.5 Q398.5 53.5 393.5 53.5 Q388.5 53.5 388.2 48.5 Q386.5 47.5 386.5 46.0 Z" fill="#9a9a9a"/>
<rect x="419.5" y="40.5" width="6" height="6" fill="#fff" stroke="#111" stroke-width="1.2"/><circle cx="426.5" cy="46.5" r="3.6" fill="#bfe6ef" stroke="#113" stroke-width="1.3"/><path d="M429 49 L431.5 51.5" stroke="#111" stroke-width="1.8"/><circle cx="425.8" cy="46.8" r="1" fill="#111"/>
<circle cx="447" cy="45" r="3.8" fill="#bfe6ef" stroke="#1a2a30" stroke-width="1.3"/><path d="M449.7 47.7 L452.5 50.5" stroke="#111" stroke-width="1.8"/><path d="M450.5 41 H454" stroke="#111" stroke-width="1"/>
<circle cx="469.5" cy="45.5" r="3.8" fill="#bfe6ef" stroke="#1a2a30" stroke-width="1.3"/><path d="M472.2 48.2 L475 51" stroke="#111" stroke-width="1.8"/><path d="M472.5 41 H476.5 M474.5 39 V43" stroke="#111" stroke-width="1"/>
<path d="M488 42 H492 L488.5 46 H493 L489 50.5" fill="none" stroke="#a0a0a0" stroke-width="1.2"/><path d="M490 50 L497 42 L498.5 43.5 L491.5 51 Z" fill="#c8c8c8" stroke="#9a9a9a" stroke-width="0.8"/><path d="M488 51.5 H498" stroke="#a8a8a8" stroke-width="0.8"/>
<ellipse cx="515" cy="46.5" rx="6" ry="4.8" fill="#9c9c9c"/><circle cx="514" cy="46" r="1.8" fill="#d0d0d0"/><path d="M510.5 41 L511 40 M513 40.5 V39.5 M515.5 40.5 V39.5 M518 41 L518.5 40" stroke="#aaa" stroke-width="0.8"/>
<circle cx="538.5" cy="45" r="4" fill="#e8f4f8" stroke="#1f5060" stroke-width="1.3"/><path d="M541.5 48 L544.5 51" stroke="#111" stroke-width="1.6"/><rect x="538" y="43" width="1.3" height="3" fill="#5a7a9a"/><path d="M533 49.5 L535.5 48 L535 50.5 Z" fill="#6a1e6e"/><rect x="532.5" y="44" width="1" height="1" fill="#333"/><rect x="532.5" y="46" width="1" height="1" fill="#333"/>
<path d="M558.5 46.3 H570.5 M564.5 40.3 V52.3" stroke="#111" stroke-width="1.3"/><path d="M564.5 39.2 L562.2 42 H566.8Z M564.5 53.4 L562.2 50.6 H566.8Z M557.4 46.3 L560.2 44 V48.6Z M571.6 46.3 L568.8 44 V48.6Z" fill="#111"/>
<circle cx="586.5" cy="45" r="4.3" fill="#fff" stroke="#111" stroke-width="1.3"/><path d="M589.5 48.3 L593.5 52" stroke="#1a3a3a" stroke-width="2"/><rect x="585.8" y="42.5" width="1.5" height="2" fill="#111"/><rect x="585.8" y="45.5" width="1.5" height="1.5" fill="#111"/>
<path d="M605 47 A5 5 0 0 1 613.5 42.5 M615 45.5 A5 5 0 0 1 606.5 50" fill="none" stroke="#b0b0b0" stroke-width="1.3"/><path d="M614.5 40.5 V44 H611Z M605.5 51.5 V48 H609Z" fill="#a8a8a8"/>
<circle cx="639.4" cy="44.2" r="4.6" fill="#2f7f2f" stroke="#1a3a1a" stroke-width="0.8"/><rect x="637.5" y="48" width="4" height="3.5" rx="1" fill="#333"/>
<circle cx="661.4" cy="44.2" r="4.4" fill="#f2f27a" stroke="#222" stroke-width="1.2"/><rect x="659.5" y="48" width="4" height="3.5" rx="1" fill="#333"/>
<path d="M679 43 L679 50.5 L681 48.5 L683 51 L684 50 L682.5 47.5 L685 47 Z" fill="#a0a0a0"/><circle cx="687.5" cy="44" r="3.3" fill="none" stroke="#a8a8a8" stroke-width="1.2"/><circle cx="687.5" cy="44" r="1" fill="#a8a8a8"/><path d="M686 47.5 V50.5 H689 V47.5" fill="none" stroke="#b0b0b0"/>
<circle cx="704" cy="43.5" r="2.6" fill="none" stroke="#333" stroke-width="1.1"/><circle cx="704" cy="43.5" r="0.9" fill="#333"/><circle cx="710" cy="49.5" r="2.6" fill="#d8e890" stroke="#5a6a20" stroke-width="1.1"/><path d="M710 40 V45 M708 43 L710 45.5 L712 43" fill="none" stroke="#111" stroke-width="1.4"/><path d="M702 49.5 H706 M704 47 L701.5 49.5 L704 52" fill="none" stroke="#111" stroke-width="1.4"/>
<path d="M724 46 L730 41 V44 H735 V48 H730 V51 Z" fill="#b4b4b4"/><path d="M726.5 46 L730 43.5" stroke="#e8e8e8" stroke-width="0.8"/>
<path d="M759 46 L753 41 V44 H748 V48 H753 V51 Z" fill="#b4b4b4"/>
<path d="M774.5 43 L778 39.5 V49 L774.5 52 Z" fill="#e8e8f4" stroke="#1a1a4a" stroke-width="1"/><path d="M777.5 43.5 L781 40 V49.5 L777.5 52.5 Z" fill="#f0f0f8" stroke="#1a1a4a" stroke-width="1"/><path d="M780.5 44 L784.5 40.5 V50 L780.5 53 Z" fill="#fafaff" stroke="#1a1a4a" stroke-width="1"/>
<path d="M795 41.5 H808" stroke="#111" stroke-width="1.4"/><path d="M795 45 H808" stroke="#6a1414" stroke-width="1.3" stroke-dasharray="3 1.5"/><path d="M795 48 H808" stroke="#111" stroke-width="1.3" stroke-dasharray="3 1 1 1"/><path d="M795 51 H808" stroke="#111" stroke-width="1.3" stroke-dasharray="1.3 1.3"/>
<path d="M819 42 H830 L826.5 46 V50.5 H823 V46 Z" fill="#d6d6d6" stroke="#a8a8a8" stroke-width="1"/><path d="M821.5 40 V42 M824.5 39.5 V42 M827.5 40 V42" stroke="#a8a8a8" stroke-width="1"/>
<path d="M14 67 L18.5 71.5 M18.5 67 L14 71.5" stroke="#7a7a7a" stroke-width="1.1"/>
<path d="M32.5 64.5 L42.5 74.8" stroke="#222" stroke-width="1.1"/>
<path d="M53.5 72.5 Q55 64 60.8 64 Q66.5 64 68 72.5" fill="none" stroke="#222" stroke-width="1.1"/><path d="M52.5 73 L54.5 70.5 L55.2 73.2Z M68.8 73 L66.8 70.5 L66.1 73.2Z" fill="#222"/><path d="M58.6 71.6 H63 M60.8 69.4 V73.8" stroke="#111" stroke-width="1.3"/>
<path d="M77.5 74.5 L81 68 L83 71 L87 65" fill="none" stroke="#222" stroke-width="1.1"/>
<path d="M100.5 64.8 H105 L111.5 70.5 L101.5 74.5 V68" fill="none" stroke="#222" stroke-width="1.2"/>
<circle cx="127.4" cy="70.4" r="5.8" fill="none" stroke="#333" stroke-width="1.1"/><path d="M126.2 69.2 L128.6 71.6 M128.6 69.2 L126.2 71.6" stroke="#8a8a8a" stroke-width="0.8"/>
<ellipse cx="150" cy="70.5" rx="7.5" ry="3.5" fill="none" stroke="#222" stroke-width="1.1"/>
<rect x="166.5" y="65.5" width="13.5" height="9" fill="none" stroke="#222" stroke-width="1.2"/>
<polygon points="195.00,63.00 196.82,67.79 201.94,68.04 197.95,71.26 199.29,76.21 195.00,73.40 190.71,76.21 192.05,71.26 188.06,68.04 193.18,67.79" fill="none" stroke="#222" stroke-width="1.1"/>
<polygon points="224.54,72.79 220.59,76.74 215.01,76.74 211.06,72.79 211.06,67.21 215.01,63.26 220.59,63.26 224.54,67.21" fill="none" stroke="#222" stroke-width="1.1"/>
<rect x="232" y="58.5" width="3" height="22.5" fill="#fafafa"/>
<path d="M243.5 65.5 H255" stroke="#222" stroke-width="1.2"/><path d="M247 65 L251.5 72 M251.5 65 L247 72" stroke="#1a1a3a" stroke-width="1.2"/><circle cx="246.8" cy="73.5" r="1.8" fill="none" stroke="#1a1a50" stroke-width="1.2"/><circle cx="251.8" cy="73.5" r="1.8" fill="none" stroke="#1a1a50" stroke-width="1.2"/>
<path d="M266 75.5 L274.5 67.5 M271 62 L280 71.5" stroke="#222" stroke-width="1.1"/><circle cx="273.5" cy="67.5" r="0.9" fill="#111"/>
<path d="M288.5 77 V64 H302" fill="none" stroke="#222" stroke-width="1.4"/><path d="M289 70 Q290.5 65.5 296 65" fill="none" stroke="#555" stroke-width="1"/>
<path d="M311 77 V64 H324" fill="none" stroke="#222" stroke-width="1.4"/><path d="M311.5 71 L319 64.5" stroke="#7a4a5a" stroke-width="1"/>
<path d="M334 64.5 H346 V75 H339 M334 64.5 V75" fill="none" stroke="#b8b8b8" stroke-width="1.2"/><rect x="345" y="63" width="3" height="3" fill="#f0f0f0" stroke="#aaa" stroke-width="0.8"/>
<path d="M354.5 77 V69 L361 63.5 H370" fill="none" stroke="#333" stroke-width="1.3"/><path d="M360 77 V72 L364.5 68 H370" fill="none" stroke="#333" stroke-width="1.3"/><path d="M355 69 L361 63.5 L364.5 68 L360 72 Z" fill="#f0c8e0" opacity="0.8"/><rect x="357" y="67" width="1.6" height="1.6" fill="#602040"/><rect x="360" y="64.5" width="1.6" height="1.6" fill="#602040"/>
<ellipse cx="384.4" cy="69.8" rx="8" ry="3" fill="#e8e8e8" stroke="#a8a8a8" stroke-width="1"/><path d="M379 69.8 H390" stroke="#b0b0b0" stroke-width="0.8"/>
<rect x="400" y="62.5" width="15.5" height="15" fill="none" stroke="#a8a8a8" stroke-width="1"/><rect x="402.5" y="65" width="10.5" height="10" fill="none" stroke="#b0b0b0" stroke-width="1"/><rect x="404.5" y="67" width="6.5" height="6" fill="none" stroke="#a8a8a8" stroke-width="1"/><rect x="406.5" y="69" width="2.5" height="2" fill="none" stroke="#a8a8a8" stroke-width="0.8"/>
<rect x="422.5" y="62.5" width="5" height="5" fill="none" stroke="#a8a8a8" stroke-width="1"/><rect x="424.5" y="64.5" width="5" height="5" fill="#f0f0f0" stroke="#a8a8a8" stroke-width="1"/><path d="M431 66 H434 M433 65 L434 66 L433 67" fill="none" stroke="#a8a8a8" stroke-width="0.9"/><rect x="430.5" y="71.5" width="5" height="5" fill="none" stroke="#a8a8a8" stroke-width="1"/><rect x="432" y="73" width="4.5" height="4" fill="#f0f0f0" stroke="#a8a8a8" stroke-width="1"/>
<rect x="444.5" y="62.5" width="5" height="5" fill="none" stroke="#a8a8a8" stroke-width="1"/><rect x="446.5" y="64.5" width="5" height="5" fill="#f0f0f0" stroke="#a8a8a8" stroke-width="1"/><path d="M453 66 H456 M455 65 L456 66 L455 67" fill="none" stroke="#a8a8a8" stroke-width="0.9"/><path d="M451.5 70.5 H456.5 V73.5 L454 75.5 H451.5Z" fill="none" stroke="#a8a8a8" stroke-width="1"/>
<rect x="467.5" y="62.5" width="5" height="5" fill="none" stroke="#a8a8a8" stroke-width="1"/><rect x="469.5" y="64.5" width="5" height="5" fill="#f0f0f0" stroke="#a8a8a8" stroke-width="1"/><path d="M476 66 H479 M478 65 L479 66 L478 67" fill="none" stroke="#a8a8a8" stroke-width="0.9"/><rect x="478" y="73" width="2.5" height="2.5" fill="#b8b8b8"/>
<rect x="496.5" y="62.5" width="6" height="6" fill="none" stroke="#a8a8a8" stroke-width="1.1"/><rect x="504.5" y="70.5" width="6.5" height="6.5" fill="none" stroke="#a8a8a8" stroke-width="1.1"/><path d="M502.5 66 L507 70" stroke="#b0b0b0" stroke-width="0.9"/><circle cx="509.5" cy="67.5" r="0.8" fill="#999"/>
<rect x="519.5" y="65.5" width="5" height="11" fill="none" stroke="#a8a8a8" stroke-width="1.1"/><rect x="528.5" y="65.5" width="5.5" height="11" fill="none" stroke="#a8a8a8" stroke-width="1.1"/><path d="M526.5 64 V78 M521 62.5 H532" stroke="#a8a8a8" stroke-width="1"/>
<circle cx="549" cy="70" r="5" fill="none" stroke="#a8a8a8" stroke-width="1.1"/><path d="M544 62.5 H553.5" stroke="#a8a8a8" stroke-width="1"/><path d="M543 70 H555 M549 64 V76" stroke="#c0c0c0" stroke-width="0.6" stroke-dasharray="1 1"/>
<path d="M565 68.5 H580 L576.5 76.5 H565.5 Z" fill="none" stroke="#a8a8a8" stroke-width="1.1"/><path d="M566 62.5 H576.5" stroke="#a8a8a8" stroke-width="1"/><path d="M570 68.5 L568 76" stroke="#c0c0c0" stroke-width="0.6"/>
<rect x="587" y="66" width="13.5" height="10" fill="none" stroke="#a8a8a8" stroke-width="1.1"/><path d="M588.5 68.5 H599" stroke="#b0b0b0"/><path d="M589 62.5 H599" stroke="#a8a8a8" stroke-width="1"/>
<path d="M611 63.5 H623 M611 66.5 H623 M611 69.5 H623 M611 72.5 H623 M611 75.5 H623" stroke="#b0b0b0" stroke-width="1.1" stroke-dasharray="2.5 1"/><path d="M609.5 66 V75 M610 77.5 H619" stroke="#a8a8a8" stroke-width="1"/>
<path d="M632.5 76 Q632.5 65 640 65 Q647.5 65 647.5 76" fill="none" stroke="#b0b0b0" stroke-width="1.1"/><rect x="632" y="65" width="2" height="2" fill="#b0b0b0"/><rect x="639" y="62.5" width="2" height="2" fill="#b0b0b0"/><rect x="646" y="65" width="2" height="2" fill="#b0b0b0"/>
<path d="M656 63.5 V73 M659 63.5 V72 M662 63.5 V71 M665.5 63.5 V70 M668.5 63.5 V69" stroke="#b0b0b0" stroke-width="1"/><path d="M656 76.5 Q664 74 669 66" fill="none" stroke="#b0b0b0" stroke-width="1"/>
<path d="M678 76 Q686 72 684 69 Q683 66 690 63" fill="none" stroke="#b0b0b0" stroke-width="1" stroke-dasharray="1.5 1"/><circle cx="678.5" cy="75" r="1.2" fill="#a8a8a8"/><circle cx="683.8" cy="69.5" r="1.2" fill="#a8a8a8"/><circle cx="690.5" cy="62.5" r="1.2" fill="#a8a8a8"/>
<rect x="700.5" y="63.5" width="12.5" height="12.5" fill="none" stroke="#a8a8a8" stroke-width="1.1"/><path d="M706.8 64 V76 M701 69.8 H713" stroke="#a8a8a8" stroke-width="1.1"/><rect x="702.5" y="65.5" width="3" height="3" fill="#d0d0d0"/><rect x="708.5" y="71.5" width="3" height="3" fill="#d0d0d0"/>
<path d="M722 62 L736 76 M736 62 L722 76 M721 69 H737 M729 61.5 V77" stroke="#b0b0b0" stroke-width="1"/><rect x="724.5" y="66.5" width="9" height="5" fill="none" stroke="#b0b0b0" stroke-width="0.9"/>
<rect x="743.5" y="60.5" width="17" height="17.5" fill="#ececec" stroke="#b0b0b0" stroke-width="1"/>
<rect x="747" y="64.5" width="5" height="5" fill="none" stroke="#a8a8a8" stroke-width="1.1"/><rect x="749.5" y="67" width="5" height="5" fill="none" stroke="#a8a8a8" stroke-width="1.1"/><rect x="752" y="70" width="5" height="5" fill="none" stroke="#a8a8a8" stroke-width="1.1"/>
<rect x="768.5" y="64.5" width="5" height="5" fill="none" stroke="#a8a8a8" stroke-width="1.1"/><rect x="771.5" y="67" width="5" height="5" fill="none" stroke="#a8a8a8" stroke-width="1.1"/><rect x="775" y="70.5" width="5.5" height="5" fill="none" stroke="#a8a8a8" stroke-width="1.1"/>
<path d="M790.5 62.5 H804.5 V70.0 Q804.5 71.5 802.8 72.5 Q802.5 77.5 797.5 77.5 Q792.5 77.5 792.2 72.5 Q790.5 71.5 790.5 70.0 Z" fill="#9a9a9a"/><path d="M792.3 71.0 Q792.3 65.8 797.5 65.8 Q802.7 65.8 802.7 71.0 Z" fill="#f4f4f4"/><rect x="792.3" y="70.8" width="10.4" height="0.7" fill="#c09090" opacity="0.5"/>
<path d="M813 62.5 H827 V70.0 Q827 71.5 825.3 72.5 Q825 77.5 820 77.5 Q815 77.5 814.7 72.5 Q813 71.5 813 70.0 Z" fill="#9a9a9a"/>
<path d="M10.5 93.6 H19 M14.8 89.3 V98" stroke="#111" stroke-width="1.3"/><rect x="13.8" y="92.6" width="2" height="2" fill="#000"/>
<path d="M32.5 90 V97 M43.5 90 V97 M33 93.5 H43" stroke="#222" stroke-width="1.2"/><path d="M33 93.5 L35.5 92 V95 Z M43 93.5 L40.5 92 V95 Z" fill="#111"/>
<path d="M55.5 90 V92.5 M55.5 91.5 H59 V94.5 H66.5 V100" fill="none" stroke="#222" stroke-width="1.2"/><path d="M57 92 H59.5" stroke="#222" stroke-width="1"/><path d="M63.5 100 H67.5 M66.5 98 L65 100 L68 100Z" stroke="#111" stroke-width="1"/>
<rect x="75.5" y="92.5" width="10" height="7" fill="none" stroke="#222" stroke-width="1.2"/><path d="M75.5 87.5 V91 M85.5 87.5 V91 M76 89 H85 M88 92.5 V99.5 M86.5 92.5 H89.5 M86.5 99.5 H89.5" stroke="#222" stroke-width="1"/><path d="M76 89 L78 88 V90Z M85 89 L83 88 V90Z" fill="#111"/>
<path d="M99.5 88 V100.5 H112" fill="none" stroke="#222" stroke-width="1.2"/><path d="M100 91.5 Q107 92 108.5 100" fill="none" stroke="#222" stroke-width="1"/><path d="M100 91.5 L102 90.5 L102 92.5Z M108.5 100 L107.5 98 L109.5 98Z" fill="#111"/>
<path d="M120.5 94 L125 88 H131 L136 94 L128 101 Z" fill="none" stroke="#222" stroke-width="1.1"/><path d="M126 97.5 Q128 95.5 130 97.5" fill="none" stroke="#222"/><rect x="125" y="96.8" width="1.8" height="1.8" fill="#111"/><rect x="129.5" y="96.8" width="1.8" height="1.8" fill="#111"/>
<rect x="5" y="117" width="13" height="13" fill="none" stroke="#3a1a3a" stroke-width="1.3"/><path d="M5 117 H18 M5 130 H18" stroke="#b03060" stroke-width="0.6" opacity="0.6"/><rect x="3.8" y="115.8" width="2.6" height="2.6" fill="#2a4a5a"/><rect x="16.6" y="115.8" width="2.6" height="2.6" fill="#111"/><rect x="3.8" y="128.6" width="2.6" height="2.6" fill="#111"/><rect x="16.6" y="128.6" width="2.6" height="2.6" fill="#111"/><rect x="10.5" y="122.5" width="2" height="2" fill="#4ab060"/>
<path d="M2.5 157.5 L7.5 146.5 L18 140.5" fill="none" stroke="#22226a" stroke-width="1.1"/><circle cx="7.5" cy="146.5" r="1.6" fill="#111"/><path d="M8.5 147.5 L18 154.5 L13.8 150.8 L12.2 156.8 Z" fill="#20205a" stroke="#20205a" stroke-width="0.6"/>
<text x="2" y="176.3" font-size="11" font-weight="bold" fill="#1a1a80" textLength="18" lengthAdjust="spacingAndGlyphs">abc</text><rect x="3" y="176.8" width="16" height="2.2" fill="#14143a"/>
<ellipse cx="11" cy="193.5" rx="7.5" ry="4.5" fill="none" stroke="#9a5a6a" stroke-width="1"/><ellipse cx="11" cy="193.5" rx="4.5" ry="7.5" fill="none" stroke="#9a5a6a" stroke-width="1"/><rect x="7.5" y="190" width="7" height="7" fill="none" stroke="#333" stroke-width="0.9"/>
<defs><radialGradient id="glow"><stop offset="0" stop-color="#f0ec30"/><stop offset="0.55" stop-color="#f4f070" stop-opacity="0.8"/><stop offset="1" stop-color="#f4f070" stop-opacity="0"/></radialGradient></defs><ellipse cx="4" cy="219" rx="9" ry="10" fill="url(#glow)"/><path d="M2.5 216.5 L10 209.5 L17 215 L18.5 221 L14.5 226 Z" fill="#f8f6e0" fill-opacity="0.5" stroke="#22224a" stroke-width="1.2"/>
<path d="M4 247 L11 238 L16.5 234.5 L15 244.5 L11.5 247 Z" fill="#6a6a90" stroke="#33334a" stroke-width="0.8"/><path d="M4 247 L11 238 L12 244 Z" fill="#e8e8f4"/>
<path d="M8.5 262 Q8.5 258.5 10.8 258.5 Q13 258.5 13 262 L17 267.5 L14 271 H7.5 L4.5 267.5 Z" fill="#20a030" stroke="#0a5a10" stroke-width="0.8"/><rect x="8.5" y="258.5" width="4.5" height="2" fill="#40c050"/>
<rect x="9" y="280" width="4" height="15.5" fill="#fff" stroke="#222" stroke-width="1"/><path d="M9 285 L13 282 M9 289 L13 286 M9 293 L13 290" stroke="#222" stroke-width="1.1"/><text x="3" y="293" font-size="4.5" fill="#333">N</text><text x="14.3" y="293" font-size="4.5" fill="#333">C</text>
<rect x="4.6" y="724.6" width="21.3" height="18.8" rx="2.5" fill="#e4e4e4" stroke="#5c5c5c" stroke-width="1.5"/>
<rect x="50.1" y="724.6" width="20.8" height="18.8" rx="2.5" fill="#e4e4e4" stroke="#5c5c5c" stroke-width="1.5"/>
<rect x="73.6" y="724.6" width="19.8" height="18.8" rx="2.5" fill="#e4e4e4" stroke="#5c5c5c" stroke-width="1.5"/>
<rect x="95.6" y="724.6" width="19.8" height="18.8" rx="2.5" fill="#e4e4e4" stroke="#5c5c5c" stroke-width="1.5"/>
<rect x="118.6" y="724.6" width="20.3" height="18.8" rx="2.5" fill="#e4e4e4" stroke="#5c5c5c" stroke-width="1.5"/>
<rect x="189.6" y="724.6" width="21.3" height="18.8" rx="2.5" fill="#e4e4e4" stroke="#5c5c5c" stroke-width="1.5"/>
<rect x="213.1" y="724.6" width="20.3" height="18.8" rx="2.5" fill="#e4e4e4" stroke="#5c5c5c" stroke-width="1.5"/>
<path d="M11 737.5 L19.5 729" stroke="#222" stroke-width="1"/><circle cx="10.5" cy="738" r="1.5" fill="#fff" stroke="#222" stroke-width="1"/><circle cx="19.8" cy="728.8" r="1.5" fill="#fff" stroke="#222" stroke-width="1"/>
<path d="M32 729 Q37 729 39 731.5 Q41 734 41.5 739" fill="none" stroke="#222" stroke-width="1.1"/><circle cx="39.5" cy="731.8" r="1" fill="#fff" stroke="#222" stroke-width="0.8"/><path d="M42 730.5 L45 727.5 M42 730.5 V728.5 M42 730.5 H44" stroke="#22224a" stroke-width="1"/><path d="M33 738 L37.5 734 M37.5 734 V736.5 M37.5 734 H35" stroke="#22224a" stroke-width="1"/>
<path d="M55 729 H60 Q63.5 730 64.5 734 V739" fill="none" stroke="#222" stroke-width="1.1"/>
<path d="M78 730 L89 739.5 M89 730 L78 739.5" stroke="#222" stroke-width="1"/><circle cx="83.5" cy="734.5" r="1.2" fill="#fff" stroke="#111" stroke-width="1"/>
<path d="M101.5 728.5 H106 Q111.5 729.5 111.5 738" fill="none" stroke="#222" stroke-width="1.1"/><circle cx="102.5" cy="737.5" r="1.3" fill="#fff" stroke="#222" stroke-width="0.9"/>
<path d="M128.8 728 L134.5 733.5 L128.8 739 L123 733.5 Z" fill="#fbeef0" stroke="#222" stroke-width="1.3"/><rect x="127.8" y="727" width="2" height="2" fill="#222"/><rect x="127.8" y="738" width="2" height="2" fill="#222"/>
<path d="M145 737.5 H156 M149.5 726.5 V737.5" stroke="#222" stroke-width="1.1"/><circle cx="149.5" cy="737.5" r="0.9" fill="#111"/>
<path d="M165 733 Q168 728 172 730 Q176 733 175 740" fill="none" stroke="#222" stroke-width="1.2"/><path d="M167 727 L180 738" stroke="#222" stroke-width="1.1"/><circle cx="172" cy="731" r="1" fill="#333"/>
<circle cx="200.4" cy="733.2" r="3.3" fill="#1a1a4a"/><path d="M198.8 731.6 L202 734.8 M202 731.6 L198.8 734.8" stroke="#e8e8f8" stroke-width="0.7"/>
<path d="M223 726.5 V734 L218 738.5 M223 734 L228 738.5" fill="none" stroke="#222" stroke-width="1.2"/><rect x="225.5" y="727" width="2" height="2" fill="#222"/><path d="M216.5 737 L218.5 739.5 L219 736.5Z" fill="#222"/>
<path d="M249.5 726.5 L257.0 734 L249.5 741.5 L242.0 734 Z" fill="none" stroke="#222" stroke-width="1.1"/><path d="M245.75 730.25 L253.25 737.75 M253.25 730.25 L245.75 737.75" stroke="#222" stroke-width="1"/><circle cx="247" cy="731" r="1.3" fill="#3a1020"/>
<path d="M272 726.5 L279.5 734 L272 741.5 L264.5 734 Z" fill="none" stroke="#222" stroke-width="1.1"/><path d="M268.25 730.25 L275.75 737.75 M275.75 730.25 L268.25 737.75" stroke="#222" stroke-width="1"/><circle cx="274.5" cy="729" r="1.3" fill="#3a1020"/>
<path d="M294.5 726.5 L302.0 734 L294.5 741.5 L287.0 734 Z" fill="none" stroke="#222" stroke-width="1.1"/><path d="M290.75 730.25 L298.25 737.75 M298.25 730.25 L290.75 737.75" stroke="#222" stroke-width="1"/><circle cx="294.5" cy="734" r="1.3" fill="#3a1020"/>
<path d="M315 739.5 L318 735.5 H327.5 L324.5 739.5 Z" fill="#6a6a6a" stroke="#333" stroke-width="0.6"/><path d="M319 727 V737" stroke="#222" stroke-width="1.1"/><path d="M321 735.5 Q324 733 327.5 734" fill="none" stroke="#333" stroke-width="1.3"/>
<path d="M338 739.5 L341 735.5 H350.5 L347.5 739.5 Z" fill="#6a6a6a" stroke="#333" stroke-width="0.6"/><path d="M342 727 V737" stroke="#222" stroke-width="1.1"/><path d="M344 735.5 Q347 733 350.5 734" fill="none" stroke="#333" stroke-width="1.3"/><path d="M348 730 L351 727.5" stroke="#333" stroke-width="1"/>
<path d="M365 730 V740 L367.5 737.5 L369 741 L370.3 740.4 L368.8 737 L372 736.8 Z" fill="#111"/><path d="M370 728 L378 736 M378 728 L370 736" stroke="#333" stroke-width="1"/><circle cx="374" cy="732" r="1.2" fill="#f0f0f0" stroke="#333" stroke-width="0.8"/>
<path d="M388 730 V740 L390.5 737.5 L392 741 L393.3 740.4 L391.8 737 L395 736.8 Z" fill="#111"/><path d="M394 728.5 L399.5 734 M399.5 728.5 L394 734" stroke="#a02030" stroke-width="1.6"/>
<path d="M413.5 736 L419 731.5 L427.5 734 L422 739 Z" fill="none" stroke="#222" stroke-width="1.1"/><path d="M419.5 727 V735" stroke="#222" stroke-width="1"/><circle cx="419.5" cy="727" r="1.2" fill="#222"/><circle cx="419.5" cy="736" r="1.1" fill="#222"/><path d="M424 726.5 V732 M422.5 730.5 L424 732.5 L425.5 730.5" fill="none" stroke="#222" stroke-width="1"/>
<path d="M437 740 L450 727.5" stroke="#222" stroke-width="1"/><circle cx="446" cy="731.5" r="1.1" fill="#222"/><circle cx="439" cy="738" r="1.3" fill="#3a1030"/><path d="M436 733 L441 729 M439 728 L441 731" stroke="#4a4a8a" stroke-width="1"/>
<path d="M458.5 728.5 L467 737 M467 728.5 L458.5 737" stroke="#333" stroke-width="1"/><circle cx="462.5" cy="732.5" r="1.3" fill="#f4f0d0" stroke="#333" stroke-width="0.8"/><rect x="465" y="730.5" width="7" height="9" fill="#f4f4f4" stroke="#555" stroke-width="1"/><path d="M466.5 733 H470.5 M466.5 735 H470.5 M466.5 737 H470.5" stroke="#333" stroke-width="0.8"/>
<path d="M483.5 729 L492.5 738.5 M492.5 729 L483.5 738.5" stroke="#8a1414" stroke-width="2.8"/><path d="M484.5 730 L491.5 737.5 M491.5 730 L484.5 737.5" stroke="#d02020" stroke-width="1"/>
<path d="M846.5 128 L849.5 125 L852.5 128 Z" fill="#333" stroke="#333" stroke-width="0.8"/>
<path d="M42 711 L39 713.5 L42 716 Z" fill="#333" stroke="#333" stroke-width="0.6"/>
<rect x="765" y="690" width="77" height="18" fill="#f5f5f5"/>
<rect x="825" y="675" width="17" height="33" fill="#f2f2f2"/>
<rect x="840" y="656" width="30" height="52" fill="#ebebeb"/>
<rect x="870" y="690" width="75" height="18" fill="#ededed"/>
<rect x="757" y="708" width="193" height="12" fill="#efefef"/>
<rect x="757" y="720" width="193" height="15" fill="#eeeeee"/>
<rect x="757" y="735" width="193" height="10" fill="#f1f1f1"/>
<rect x="790" y="708" width="60" height="27" fill="#ececec"/>
<rect x="885" y="705" width="55" height="30" fill="#eaeaea"/>
<rect x="829.5" y="22.5" width="80" height="19.5" rx="2.5" fill="url(#bdu)" stroke="#6d8fa6" stroke-width="1"/>
<path d="M829.5 25 Q829.5 22.5 832 22.5 H852 V42 H832 Q829.5 42 829.5 39.5 Z" fill="#3a8ed0"/>
<path d="M840.5 29 Q846 27 847.5 32 L849 35" fill="none" stroke="#d8f4ff" stroke-width="2"/><circle cx="837.5" cy="33.5" r="3" fill="#3a6a5a" stroke="#e0f6ff" stroke-width="2"/><circle cx="841.5" cy="29.5" r="2.8" fill="#3a6a5a" stroke="#e0f6ff" stroke-width="2"/><circle cx="848.5" cy="37" r="1.1" fill="#d8f4ff"/>
<text x="863" y="36.5" font-size="10" fill="#5a7890"><tspan stroke="#5a7890" stroke-width="0.55">拖拽上传</tspan></text>
<rect x="984.5" y="510" width="7.5" height="45" fill="#3c4a3a" opacity="0.75"/>
<rect x="986.5" y="527" width="1.6" height="25" fill="#c8c878"/>
<rect x="979" y="525" width="5" height="1" fill="#f0f0f0"/><rect x="979" y="540" width="5" height="1" fill="#f0f0f0"/>
</svg></body></html>
